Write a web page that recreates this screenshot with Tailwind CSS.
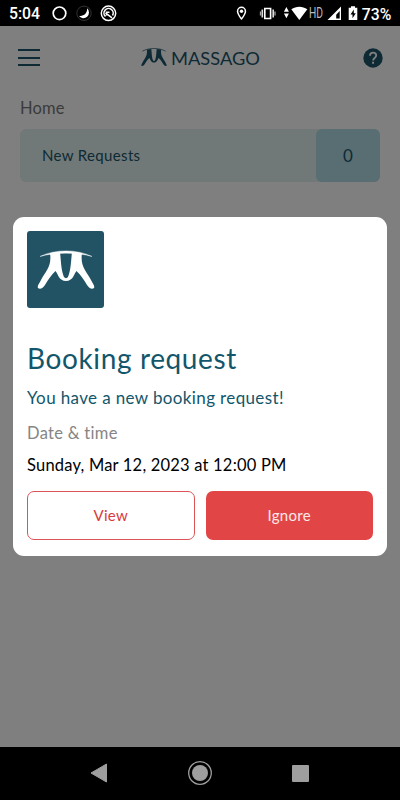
<!DOCTYPE html>
<html lang="en">
<head>
  <meta charset="UTF-8" />
  <meta name="viewport" content="width=device-width, initial-scale=1.0" />
  <title>Massago - Home</title>
  <script src="https://cdn.jsdelivr.net/npm/@tailwindcss/browser@4"></script>
  <style>
    body { font-family: 'Lato', sans-serif; }
  </style>
</head>
<body class="h-screen overflow-hidden bg-black flex flex-col">
  <!-- Status bar -->
  <div class="h-[26px] shrink-0 bg-black text-white">
    <svg class="block" width="400" height="26" viewBox="0 0 400 26" fill="none">
      <text x="9" y="19.3" font-family="Roboto" font-size="16" font-weight="500" fill="#fff" textLength="31" lengthAdjust="spacingAndGlyphs">5:04</text>
      <circle cx="59.5" cy="13.3" r="6.3" stroke="#fff" stroke-width="1.7" />
      <circle cx="84" cy="13.3" r="7.2" stroke="#333" stroke-width="1" />
      <path d="M87 8.300a5.600 5.600 0 1 1-8.200 7.500c4.500 1 9-2.500 8.200-7.500z" fill="#fff" />
      <circle cx="108.5" cy="13.3" r="7.2" stroke="#fff" stroke-width="1.5" />
      <path d="M105.500 16.500a4.600 4.600 0 1 1 7 -1M105.500 12.800l6.500 5M106.500 15.500v-3.200h3" stroke="#fff" stroke-width="1.6" />
      <path fill-rule="evenodd" d="M241.500 6.500a4.700 4.700 0 0 0-4.700 4.700c0 3.500 4.700 8.800 4.700 8.800s4.700-5.300 4.700-8.800a4.700 4.700 0 0 0-4.700-4.700zm0 1.500a3.200 3.200 0 0 1 3.200 3.200c0 1.800-1.700 4.500-3.200 6.500-1.500-2-3.200-4.700-3.200-6.500a3.200 3.200 0 0 1 3.200-3.200z" fill="#fff" />
      <circle cx="241.500" cy="11.200" r="1.700" fill="#fff" />
      <path d="M264.800 8.500h5.800v10h-5.800z" stroke="#fff" stroke-width="1.600" />
      <path d="M262.300 9.500v8M273.200 9.500v8" stroke="#ddd" stroke-width="1.600" />
      <path d="M260.500 11.500v4M275 11.500v4" stroke="#aaa" stroke-width="1.300" />
      <path d="M286.400 7l2.500 4.800h-5zM286.400 18.200l2.500-4.800h-5z" fill="#fff" />
      <path d="M291.300 9.300c4.800-3.500 11.200-3.500 16 0L299.300 20z" fill="#fff" />
      <text x="309" y="18" font-family="Roboto" font-size="14" fill="#bbb" textLength="14" lengthAdjust="spacingAndGlyphs">HD</text>
      <path fill-rule="evenodd" d="M341 6.500V20h-13.500zM339.700 11v7.600h-3.500v-3.900z" fill="#fff" />
      <path fill-rule="evenodd" d="M351 6.300h4v1.400h2.300V20h-8.600V7.700h2.300zM353.800 9.500l-3.300 5h2v3.700l3.300-5h-2z" fill="#fff" />
      <text x="361.800" y="19.500" font-family="Roboto" font-size="16" font-weight="500" fill="#fff" textLength="29.500" lengthAdjust="spacingAndGlyphs">73%</text>
    </svg>
  </div>

  <!-- App -->
  <div class="relative flex-1 bg-white">
    <header class="h-[63px] pl-[18px] pr-[17px] flex items-center justify-between">
      <div class="w-[22px] h-[17px] flex flex-col justify-between">
        <div class="h-[2px] bg-[#1d5469]"></div>
        <div class="h-[2px] bg-[#1d5469]"></div>
        <div class="h-[2px] bg-[#1d5469]"></div>
      </div>
      <div class="flex items-center mr-[2px]">
        <svg width="26" height="19" viewBox="0 0 58 42" preserveAspectRatio="none">
          <path d="M3 7C18-1 40-1 55 7" fill="none" stroke="#1d5469" stroke-width="1.5" />
          <path d="M13 3.500L23 2C24 11 24 21 27 28h4C34 21 34 11 35 2L45 3.500C43 17 49 22 54 31c2 4 4 6 3 8-2 2-5 0-7-3-3-5-6-10-10.500-14C37 25 36 32 29 32S21 25 18.500 22C14 26 11 31 8 36c-2 3-5 5-7 3-1-2 1-4 3-8C9 22 15 17 13 3.500z" fill="#1d5469" />
        </svg>
        <svg class="ml-1" width="90" height="20" viewBox="0 0 90 20">
          <text x="0" y="16.500" font-family="Lato" font-size="17.500" fill="#1d5469" textLength="89" lengthAdjust="spacingAndGlyphs">MASSAGO</text>
        </svg>
      </div>
      <svg width="20" height="20" viewBox="0 0 20 20" fill="none">
        <circle cx="10" cy="10" r="9.700" fill="#1d5469" />
        <path d="M7 7.800C7 3.500 13.200 3.800 13.200 7.500c0 2.400-3.100 2.500-3.100 5" stroke="#fff" stroke-width="1.800" />
        <path d="M9.100 13.800H11v1.900H9.100z" fill="#fff" />
      </svg>
    </header>

    <main class="px-5">
      <h2 class="mt-[7px] h-6 leading-6 text-[16.500px] tracking-[0.200px] text-[#777]">Home</h2>
      <div class="mt-[9px] h-[53px] rounded-md bg-[#e0f2ef] flex items-center justify-between">
        <span class="pl-[22px] text-[15px] tracking-[0.350px] text-[#1d5469]">New Requests</span>
        <span class="w-16 h-full rounded-md bg-[#b0dce5] flex items-center justify-center text-[17px] text-[#1d5469]">0</span>
      </div>
    </main>

    <!-- Booking request dialog -->
    <div class="absolute inset-0 bg-black/50 px-[13px] pt-[191px]">
      <div class="h-[339px] w-[374px] rounded-[11px] bg-white px-[14px] pt-[14px] whitespace-nowrap">
        <div class="size-[77px] rounded-[3px] bg-[#215365] flex items-center justify-center">
          <svg width="58" height="42" viewBox="0 0 58 42">
            <path d="M3 7.500C18 0 40 0 55 7.500 40 3 18 3 3 7.500z" fill="#fff" stroke="#fff" stroke-width="0.400" />
            <path d="M13 4L23 3C24 11 24 21 27 28c1 1.500 3 1.500 4 0C34 21 34 11 35 3L45 4C43 17 49 22 54 31c2 4 4 6 3 8-2 2-5 0-7-3-3-5-6-10-10.500-14C37 25 36 32 29 32S21 25 18.500 22C14 26 11 31 8 36c-2 3-5 5-7 3-1-2 1-4 3-8C9 22 15 17 13 4z" fill="#fff" />
          </svg>
        </div>
        <h1 class="mt-8 h-9 leading-9 text-[28px] tracking-[0.620px] text-[#12566b]">Booking request</h1>
        <p class="mt-[10px] h-6 leading-6 text-[17px] tracking-[0.370px] text-[#12566b]">You have a new booking request!</p>
        <p class="mt-[11px] h-6 leading-6 text-[16.500px] tracking-[0.300px] text-[#858585]">Date &amp; time</p>
        <p class="mt-[8px] h-6 leading-6 text-[16.500px] tracking-[0.200px] text-black">Sunday, Mar 12, 2023 at 12:00 PM</p>
        <div class="mt-[14px] grid grid-cols-2 gap-[11px] text-[15px] tracking-[0.300px]">
          <button class="h-[49px] rounded-[7px] border border-[#dd5457] text-[#d93a3e]">View</button>
          <button class="h-[49px] rounded-[7px] bg-[#e14545] text-[#fbe9e9]">Ignore</button>
        </div>
      </div>
    </div>
  </div>

  <!-- Navigation bar -->
  <nav class="h-[53px] shrink-0 bg-black px-[90px] pb-px flex items-center justify-between">
    <svg width="18" height="20" viewBox="0 0 18 20"><path d="M16.500 1v18L1 10z" fill="#9e9e9e" stroke="#9e9e9e" stroke-linejoin="round" /></svg>
    <svg width="24" height="24" viewBox="0 0 24 24"><circle cx="12" cy="12" r="11.300" fill="none" stroke="#9e9e9e" stroke-width="1.300" /><circle cx="12" cy="12" r="8" fill="#9e9e9e" /></svg>
    <div class="size-[17px] rounded-[1px] bg-[#9e9e9e] mr-[1px]"></div>
  </nav>
</body>
</html>
